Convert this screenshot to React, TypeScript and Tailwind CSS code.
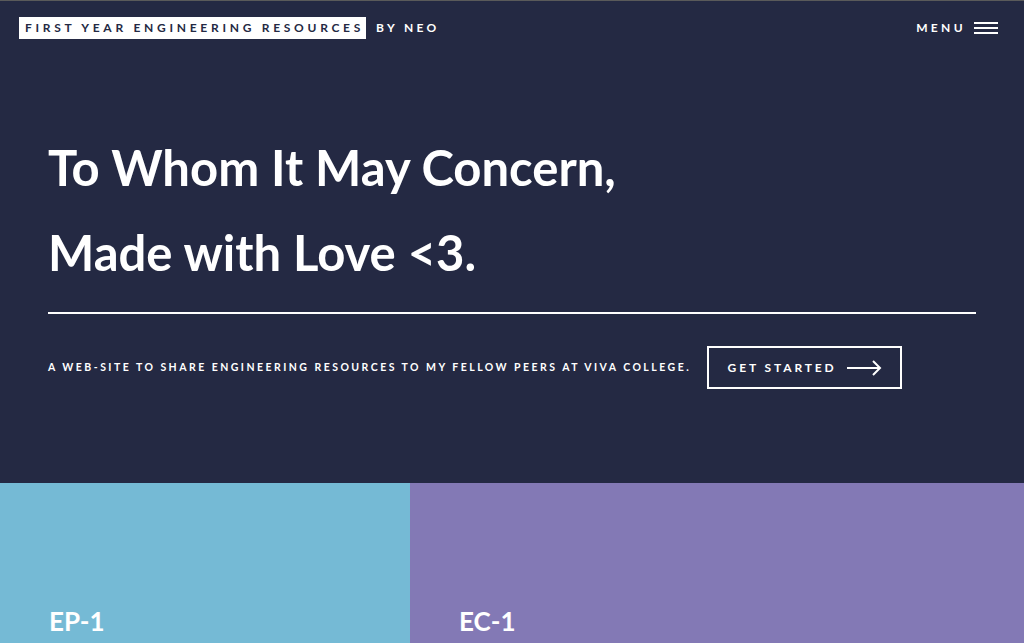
const tiles = [
  { code: "EP-1", bg: "bg-[#75bad5]" },
  { code: "EC-1", bg: "bg-[#8379b5]" },
];

function Arrow() {
  return (
    <svg width="35" height="16" viewBox="0 0 35 16" fill="none" stroke="white" strokeWidth="2">
      <path d="M0 8h33" />
      <path d="M26 1l7 7-7 7" />
    </svg>
  );
}

export default function App() {
  return (
    <div className="min-h-screen overflow-hidden border-t border-[#5a5a5a] bg-[#242943] font-['Lato',sans-serif] text-white">
      {/* Header */}
      <header className="flex h-[54px] items-center justify-between pl-[19px] pr-[26px]">
        <div className="flex items-center">
          <span className="flex h-[22px] items-center bg-white pl-[6px] pr-[2px] text-[12px] font-bold tracking-[0.31em] text-[#242943]">
            FIRST YEAR ENGINEERING RESOURCES
          </span>
          <span className="ml-[10px] text-[12px] font-bold tracking-[0.28em]">BY NEO</span>
        </div>
        <button className="flex items-center gap-[8px] text-[12px] font-bold tracking-[0.28em]">
          MENU
          <span className="flex w-[24px] flex-col gap-[3px]">
            <span className="h-[2px] bg-white" />
            <span className="h-[2px] bg-white" />
            <span className="h-[2px] bg-white" />
          </span>
        </button>
      </header>

      {/* Banner */}
      <section className="h-[428px] px-[48px] pt-[70px]">
        <h1 className="text-[49px] font-bold leading-[85px]">
          To Whom It May Concern,
          <br />
          Made with Love &lt;3.
        </h1>
        <div className="mt-[17px] border-t-2 border-white" />
        <div className="mt-[32px] flex items-center gap-[16px]">
          <p className="text-[10.5px] font-bold tracking-[0.235em]">
            A WEB-SITE TO SHARE ENGINEERING RESOURCES TO MY FELLOW PEERS AT VIVA COLLEGE.
          </p>
          <a className="flex h-[43px] w-[195px] items-center justify-center gap-[10px] border-2 border-white text-[12px] font-bold tracking-[0.24em]">
            GET STARTED
            <Arrow />
          </a>
        </div>
      </section>

      {/* Tiles */}
      <div className="grid grid-cols-[410px_1fr]">
        {tiles.map((t) => (
          <div key={t.code} className={`${t.bg} flex h-[280px] flex-col justify-start pl-[49px] pt-[119px]`}>
            <h3 className="text-[26px] font-bold">{t.code}</h3>
          </div>
        ))}
      </div>
    </div>
  );
}
